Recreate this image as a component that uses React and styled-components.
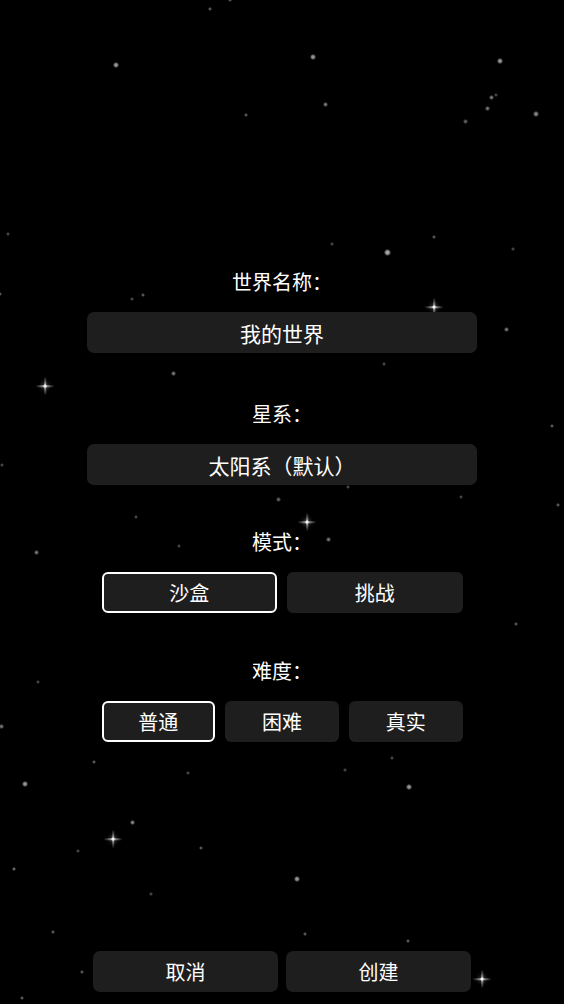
import React from 'react';
import styled, { createGlobalStyle, css } from 'styled-components';

const GlobalStyle = createGlobalStyle`
  html, body {
    margin: 0;
    padding: 0;
    background: #000;
  }
  * {
    box-sizing: border-box;
  }
`;

// x, y, size, opacity
const STARS = [
  [210, 9, 1, 0.5], [230, 0, 1, 0.5], [116, 65, 2, 0.8], [313, 57, 2, 0.8],
  [325, 104, 1.5, 0.6], [246, 115, 1, 0.5], [500, 61, 2, 0.8], [491, 97, 1.5, 0.6],
  [496, 95, 1, 0.4], [487, 108, 1.5, 0.6], [536, 114, 2, 0.7], [465, 121, 1.5, 0.5],
  [8, 234, 1, 0.4], [332, 244, 1, 0.4], [387, 252, 2.5, 0.9], [434, 237, 1, 0.5],
  [513, 249, 1, 0.4], [132, 299, 1, 0.4], [143, 295, 1, 0.5], [173, 373, 1.5, 0.6],
  [384, 364, 1, 0.4], [348, 487, 1, 0.4], [0, 294, 1, 0.5], [2, 465, 1, 0.4],
  [36, 552, 1.5, 0.6], [38, 682, 1, 0.4], [1, 726, 1.5, 0.6], [506, 329, 1.5, 0.6],
  [552, 426, 1, 0.5], [461, 497, 1, 0.4], [558, 505, 1, 0.5], [516, 624, 1, 0.5],
  [278, 499, 1.5, 0.5], [136, 517, 1, 0.4], [328, 539, 1.5, 0.6], [179, 546, 1, 0.4],
  [94, 762, 1, 0.5], [25, 784, 2, 0.8], [188, 773, 1, 0.4], [132, 822, 1.5, 0.7],
  [78, 851, 1, 0.4], [201, 848, 1, 0.5], [14, 869, 1, 0.6], [151, 894, 1, 0.4],
  [53, 932, 1, 0.5], [297, 879, 2, 0.8], [305, 934, 1, 0.5], [392, 758, 1, 0.4],
  [345, 770, 1, 0.4], [409, 787, 2, 0.8], [408, 941, 1, 0.5], [82, 972, 1, 0.5],
  [22, 998, 1, 0.5],
];

const SPARKLES = [[434, 307], [45, 386], [307, 522], [113, 839], [482, 979]];

const Screen = styled.div`
  position: relative;
  width: 100%;
  min-height: 100vh;
  height: 1004px;
  background: #000;
  overflow: hidden;
  display: flex;
  flex-direction: column;
  align-items: center;
  font-family: "Noto Sans CJK SC", "Noto Sans", sans-serif;
  color: #fff;
`;

const Sky = styled.div`
  position: absolute;
  inset: 0;
  pointer-events: none;
`;

const Star = styled.span`
  position: absolute;
  left: ${p => p.x}px;
  top: ${p => p.y}px;
  width: ${p => p.size * 2 + 2}px;
  height: ${p => p.size * 2 + 2}px;
  margin: ${p => -p.size - 1}px 0 0 ${p => -p.size - 1}px;
  border-radius: 50%;
  background: radial-gradient(circle, #fff 0%, rgba(255,255,255,0.7) 35%, rgba(255,255,255,0) 75%);
  opacity: ${p => p.o * 0.85};
`;

const arm = css`
  content: '';
  position: absolute;
  left: 50%;
  top: 50%;
  transform: translate(-50%, -50%);
`;

const Sparkle = styled.span`
  position: absolute;
  left: ${p => p.x}px;
  top: ${p => p.y}px;
  width: 4px;
  height: 4px;
  margin: -2px 0 0 -2px;
  border-radius: 50%;
  background: radial-gradient(circle, #fff 0%, rgba(255,255,255,0.5) 60%, transparent 100%);
  box-shadow: 0 0 4px 1px rgba(255,255,255,0.35);

  &::before {
    ${arm}
    width: 19px;
    height: 1.5px;
    background: linear-gradient(90deg, transparent, rgba(255,255,255,0.65) 50%, transparent);
  }
  &::after {
    ${arm}
    width: 1.5px;
    height: 19px;
    background: linear-gradient(180deg, transparent, rgba(255,255,255,0.65) 50%, transparent);
  }
`;

const Form = styled.div`
  position: relative;
  display: flex;
  flex-direction: column;
  align-items: center;
  padding-top: 268px;
`;

const Field = styled.div`
  display: flex;
  flex-direction: column;
  align-items: center;
  margin-bottom: ${p => p.spacing ?? 44}px;
`;

const Label = styled.div`
  font-size: 20px;
  line-height: 28px;
  margin-bottom: 16px;
`;

const TextBox = styled.div`
  width: 390px;
  height: 41px;
  border-radius: 7px;
  background: #1e1e1e;
  display: flex;
  align-items: center;
  justify-content: center;
  font-size: 21px;
`;

const Options = styled.div`
  width: 361px;
  display: flex;
  gap: 10px;
`;

const Option = styled.button`
  flex: 1;
  height: 41px;
  border-radius: 6px;
  background: #1e1e1e;
  border: 2px solid ${p => (p.active ? '#fff' : 'transparent')};
  color: #fff;
  font-family: inherit;
  font-size: 20px;
  padding: 0;
  cursor: pointer;
`;

const Footer = styled.div`
  position: relative;
  margin-top: auto;
  margin-bottom: 12px;
  display: flex;
  gap: 8px;
  width: 378px;
`;

const FooterButton = styled.button`
  flex: 1;
  height: 41px;
  border: none;
  border-radius: 7px;
  background: #1e1e1e;
  color: #fff;
  font-family: inherit;
  font-size: 20px;
  cursor: pointer;
`;

export default function App() {
  return (
    <>
      <GlobalStyle />
      <Screen>
        <Sky>
          {STARS.map(([x, y, size, o], i) => (
            <Star key={i} x={x} y={y} size={size} o={o} />
          ))}
          {SPARKLES.map(([x, y], i) => (
            <Sparkle key={i} x={x} y={y} />
          ))}
        </Sky>
        <Form>
          <Field spacing={47}>
            <Label>世界名称：</Label>
            <TextBox>我的世界</TextBox>
          </Field>
          <Field spacing={43}>
            <Label>星系：</Label>
            <TextBox>太阳系（默认）</TextBox>
          </Field>
          <Field>
            <Label>模式：</Label>
            <Options>
              <Option active>沙盒</Option>
              <Option>挑战</Option>
            </Options>
          </Field>
          <Field spacing={0}>
            <Label>难度：</Label>
            <Options>
              <Option active>普通</Option>
              <Option>困难</Option>
              <Option>真实</Option>
            </Options>
          </Field>
        </Form>
        <Footer>
          <FooterButton>取消</FooterButton>
          <FooterButton>创建</FooterButton>
        </Footer>
      </Screen>
    </>
  );
}
